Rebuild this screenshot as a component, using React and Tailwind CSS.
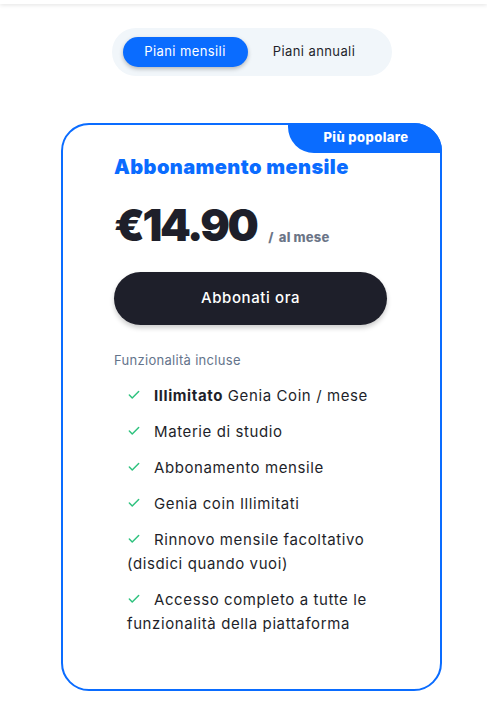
import { Check } from 'lucide-react';

const features = [
  { bold: 'Illimitato', text: ' Genia Coin / mese' },
  { text: 'Materie di studio' },
  { text: 'Abbonamento mensile' },
  { text: 'Genia coin Illimitati' },
  { text: 'Rinnovo mensile facoltativo (disdici quando vuoi)' },
  { text: 'Accesso completo a tutte le funzionalità della piattaforma' },
];

function App() {
  return (
    <div className="min-h-[718px] bg-white font-['Inter',sans-serif] text-[#1e1f2a]">
      <div className="h-[4px] bg-white shadow-[0_1px_4px_rgba(0,0,0,0.12)]" />

      <div className="flex justify-center pl-[16px] pt-[24px]">
        <div className="flex items-center w-[280px] h-[48px] rounded-full bg-[#f1f6fa] px-[11px]">
          <button
            type="button"
            className="w-[125px] h-[30px] rounded-full bg-[#0a6cff] text-white text-[13px] tracking-[0.4px] shadow-[0_2px_4px_rgba(0,0,0,0.25)]"
          >
            Piani mensili
          </button>
          <button type="button" className="flex-1 h-[30px] text-[13px] tracking-[0.4px] text-[#1e1f2a]">
            Piani annuali
          </button>
        </div>
      </div>

      <div className="flex justify-center pl-[16px] pt-[47px]">
        <section className="relative w-[381px] h-[568px] rounded-[28px] border-2 border-[#0a6cff] px-[51px] pt-[28px]">
          <div className="absolute -top-[2px] -right-[2px] w-[154px] h-[30px] bg-[#0a6cff] rounded-tr-[28px] rounded-bl-[26px] flex items-center justify-center pl-[2px]">
            <span className="text-white text-[13px] font-extrabold tracking-[0.4px]">Più popolare</span>
          </div>

          <h2 className="text-[#0a6cff] text-[20px] font-black leading-[28px] tracking-[0.4px]">
            Abbonamento mensile
          </h2>

          <div className="flex items-end mt-[18px] h-[52px]">
            <span className="text-[44px] font-black leading-[52px] tracking-[-2.4px]">€14.90</span>
            <span className="ml-[12px] mb-[4px] text-[13px] font-extrabold text-[#6b7587] tracking-[0.2px]">
              / <span className="ml-[2px]">al mese</span>
            </span>
          </div>

          <button
            type="button"
            className="mt-[21px] w-[273px] h-[53px] rounded-full bg-[#1e1f2a] text-white text-[15px] font-medium tracking-[0.6px] shadow-[0_3px_5px_rgba(0,0,0,0.2)]"
          >
            Abbonati ora
          </button>

          <p className="mt-[26px] text-[13px] text-[#64748b] tracking-[0.3px]">Funzionalità incluse</p>

          <ul className="mt-[13px] flex flex-col gap-[12px]">
            {features.map((f, i) => (
              <li key={i} className="pl-[13px] text-[15px] leading-[24px] tracking-[0.6px]">
                <Check className="inline-block w-[14px] h-[14px] text-[#2ec27e] mr-[13px] -mt-[3px]" strokeWidth={2.5} />
                {f.bold && <span className="font-bold">{f.bold}</span>}
                {f.text}
              </li>
            ))}
          </ul>
        </section>
      </div>
    </div>
  );
}

export default App;
